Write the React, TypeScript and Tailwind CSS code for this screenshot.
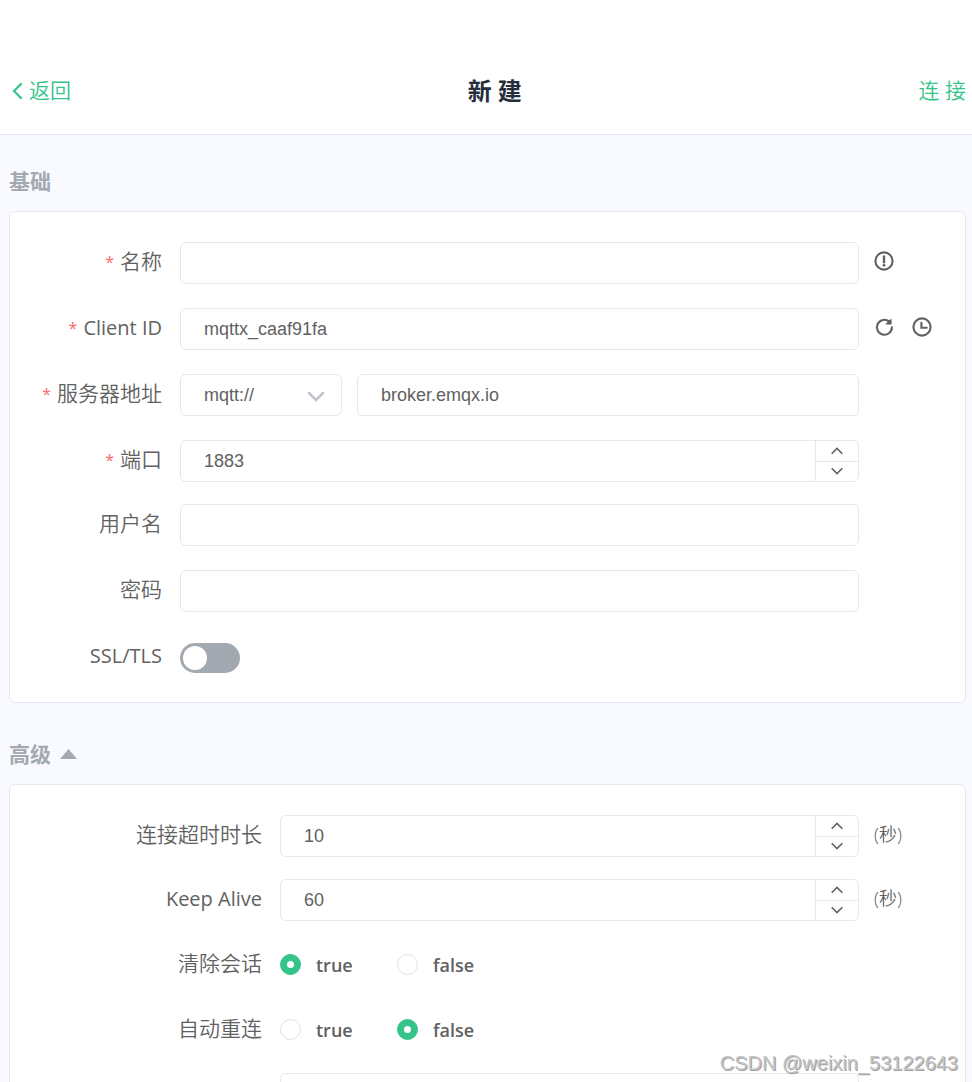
import { useState } from "react";
import type { ReactNode } from "react";

/**
 * New connection form.
 *
 * Two cards: the basic broker settings and the advanced ones, which can be
 * folded away with the arrow beside the heading.
 */

const BOX =
  "h-[42px] w-full min-w-0 rounded-md border border-[#e6e6f1] bg-white pl-[23px] font-['Liberation_Sans',Arial,sans-serif] text-lg text-[#616161] outline-none focus:border-[#34c388]";

export default function App() {
  const [name, setName] = useState("");
  const [clientId, setClientId] = useState("mqttx_caaf91fa");
  const [protocol, setProtocol] = useState("mqtt://");
  const [host, setHost] = useState("broker.emqx.io");
  const [port, setPort] = useState(1883);
  const [username, setUsername] = useState("");
  const [password, setPassword] = useState("");
  const [ssl, setSsl] = useState(false);
  const [open, setOpen] = useState(true);
  const [timeout, setTimeoutValue] = useState(10);
  const [keepAlive, setKeepAlive] = useState(60);
  const [clean, setClean] = useState(true);
  const [reconnect, setReconnect] = useState(false);
  const [version, setVersion] = useState("");

  const newClientId = () =>
    setClientId(`mqttx_${Math.random().toString(16).slice(2, 10)}`);

  return (
    <div className="relative flex h-screen flex-col overflow-hidden bg-[#f9faff] font-['Open_Sans','Noto_Sans_CJK_SC',sans-serif] text-[#616161]">
      <header className="flex items-center justify-between border-b border-[#e6e6f1] bg-white pt-[50px] pr-1.5 pb-0.5 pl-3">
        <a
          href="#back"
          className="flex h-[82px] items-center gap-[7px] text-[21px] font-[350] text-[#34c388]"
        >
          <ChevronLeft />
          返回
        </a>
        <h1 className="text-2xl font-bold text-[#262e3c]">新 建</h1>
        <button
          type="button"
          className="text-[21px] font-[350] text-[#34c388]"
        >
          连 接
        </button>
      </header>

      <main className="min-h-0 flex-1 overflow-y-auto pr-1.5 pl-[9px] [scrollbar-width:none]">
        <section aria-labelledby="basic-heading">
          <h2
            id="basic-heading"
            className="mt-[30px] mb-3.5 text-[21px] leading-8 font-bold text-[#a2a9b0]"
          >
            基础
          </h2>
          <Card>
            <Row label="名称" htmlFor="name" required trailing={<InfoIcon />}>
              <input
                id="name"
                className={BOX}
                value={name}
                onChange={(e) => setName(e.target.value)}
              />
            </Row>
            <Row
              label="Client ID"
              htmlFor="client-id"
              required
              trailing={
                <>
                  <button
                    type="button"
                    aria-label="Refresh"
                    onClick={newClientId}
                  >
                    <RefreshIcon />
                  </button>
                  <button type="button" aria-label="Timestamp">
                    <ClockIcon />
                  </button>
                </>
              }
            >
              <input
                id="client-id"
                className={BOX}
                value={clientId}
                onChange={(e) => setClientId(e.target.value)}
              />
            </Row>
            <Row label="服务器地址" htmlFor="host" required>
              <div className="flex gap-[15px]">
                <div className="relative w-[162px] shrink-0">
                  <select
                    aria-label="Protocol"
                    className={`${BOX} appearance-none`}
                    value={protocol}
                    onChange={(e) => setProtocol(e.target.value)}
                  >
                    <option>mqtt://</option>
                    <option>mqtts://</option>
                    <option>ws://</option>
                    <option>wss://</option>
                  </select>
                  <svg
                    className="pointer-events-none absolute top-[17px] right-[17px] h-3 w-[18px]"
                    viewBox="0 0 18 12"
                    fill="none"
                    stroke="#c0c4cc"
                    strokeWidth="2.6"
                    strokeLinecap="round"
                  >
                    <path d="M2 2l7 7 7-7" />
                  </svg>
                </div>
                <input
                  id="host"
                  className={BOX}
                  value={host}
                  onChange={(e) => setHost(e.target.value)}
                />
              </div>
            </Row>
            <Row label="端口" htmlFor="port" required tight>
              <NumberBox id="port" value={port} onChange={setPort} />
            </Row>
            <Row label="用户名" htmlFor="username">
              <input
                id="username"
                className={BOX}
                value={username}
                onChange={(e) => setUsername(e.target.value)}
              />
            </Row>
            <Row label="密码" htmlFor="password">
              <input
                id="password"
                type="password"
                className={BOX}
                value={password}
                onChange={(e) => setPassword(e.target.value)}
              />
            </Row>
            <Row label="SSL/TLS" htmlFor="ssl">
              <input
                id="ssl"
                type="checkbox"
                role="switch"
                checked={ssl}
                onChange={(e) => setSsl(e.target.checked)}
                className="mt-0.5 block h-[30px] w-[60px] appearance-none rounded-full bg-[#a2a9b0] p-[3px] before:block before:size-6 before:rounded-full before:bg-white before:transition-transform checked:bg-[#34c388] checked:before:translate-x-[30px]"
              />
            </Row>
          </Card>
        </section>

        <section aria-labelledby="advanced-heading">
          <div className="mt-[35px] mb-3.5 flex items-center gap-[9px] text-[#a2a9b0]">
            <h2
              id="advanced-heading"
              className="text-[21px] leading-8 font-bold"
            >
              高级
            </h2>
            <button
              type="button"
              aria-label="Toggle advanced settings"
              aria-expanded={open}
              onClick={() => setOpen(!open)}
            >
              <svg
                className={open ? "h-2.5 w-[17px]" : "h-2.5 w-[17px] rotate-180"}
                viewBox="0 0 17 10"
                fill="currentColor"
              >
                <path d="M8.5 0L17 10H0z" />
              </svg>
            </button>
          </div>
          {open && (
            <Card>
              <Row
                label="连接超时时长"
                htmlFor="timeout"
                wide
                tight
                trailing={<Unit />}
              >
                <NumberBox
                  id="timeout"
                  value={timeout}
                  onChange={setTimeoutValue}
                />
              </Row>
              <Row
                label="Keep Alive"
                htmlFor="keep-alive"
                wide
                tight
                trailing={<Unit />}
              >
                <NumberBox
                  id="keep-alive"
                  value={keepAlive}
                  onChange={setKeepAlive}
                />
              </Row>
              <Row label="清除会话" wide tight>
                <BoolRadios name="clean" value={clean} onChange={setClean} />
              </Row>
              <Row label="自动重连" wide tight>
                <BoolRadios
                  name="reconnect"
                  value={reconnect}
                  onChange={setReconnect}
                />
              </Row>
              <Row wide tight>
                <input
                  aria-label="MQTT version"
                  className={BOX}
                  value={version}
                  onChange={(e) => setVersion(e.target.value)}
                />
              </Row>
            </Card>
          )}
        </section>
      </main>

      <div className="pointer-events-none absolute right-[14px] bottom-[5px] font-['Liberation_Sans',Arial,sans-serif] text-xl text-[#c4c4c4] [text-shadow:1px_1px_0_#a0a0a0]">
        CSDN @weixin_53122643
      </div>
    </div>
  );
}

function Card({ children }: { children: ReactNode }) {
  return (
    <div className="rounded-md border border-[#e6e6f1] bg-white pt-[30px]">
      {children}
    </div>
  );
}

function Row({
  label,
  htmlFor,
  required,
  wide,
  tight,
  trailing,
  children,
}: {
  label?: string;
  htmlFor?: string;
  required?: boolean;
  wide?: boolean;
  tight?: boolean;
  trailing?: ReactNode;
  children: ReactNode;
}) {
  const labelClass = `flex shrink-0 items-center justify-end gap-1.5 pr-[18px] pb-0.5 text-[21px] ${
    wide ? "w-[270px]" : "w-[170px]"
  }`;
  const text = (
    <>
      {required && <span className="text-base text-[#f56c6c]">*</span>}
      <span
        className={/^[A-Z]/.test(label ?? "") ? "text-xl" : "font-[350]"}
      >
        {label}
      </span>
    </>
  );

  return (
    <div className={`flex min-h-[42px] ${tight ? "mb-[22px]" : "mb-6"}`}>
      {htmlFor ? (
        <label htmlFor={htmlFor} className={labelClass}>
          {text}
        </label>
      ) : (
        <div className={labelClass}>{text}</div>
      )}
      <div className="min-w-0 flex-1 self-center">{children}</div>
      <div className="flex w-[106px] shrink-0 items-center gap-[18px] pb-1 pl-[15px]">
        {trailing}
      </div>
    </div>
  );
}

function NumberBox({
  id,
  value,
  onChange,
}: {
  id: string;
  value: number;
  onChange: (next: number) => void;
}) {
  return (
    <div className="relative">
      <input
        id={id}
        inputMode="numeric"
        className={BOX}
        value={value}
        onChange={(e) => onChange(Number(e.target.value) || 0)}
      />
      <div className="absolute inset-y-px right-px flex w-[43px] flex-col divide-y divide-[#e6e6f1] border-l border-[#e6e6f1]">
        <button
          type="button"
          aria-label="Increase"
          className="flex flex-1 items-center justify-center"
          onClick={() => onChange(value + 1)}
        >
          <svg
            className="h-2 w-3"
            viewBox="0 0 12 8"
            fill="none"
            stroke="currentColor"
            strokeWidth="1.6"
          >
            <path d="M0.7 6.8L6 1.5l5.3 5.3" />
          </svg>
        </button>
        <button
          type="button"
          aria-label="Decrease"
          className="flex flex-1 items-center justify-center"
          onClick={() => onChange(Math.max(0, value - 1))}
        >
          <svg
            className="h-2 w-3"
            viewBox="0 0 12 8"
            fill="none"
            stroke="currentColor"
            strokeWidth="1.6"
          >
            <path d="M0.7 1.2L6 6.5l5.3-5.3" />
          </svg>
        </button>
      </div>
    </div>
  );
}

function BoolRadios({
  name,
  value,
  onChange,
}: {
  name: string;
  value: boolean;
  onChange: (next: boolean) => void;
}) {
  return (
    <div className="flex h-[43px] items-center">
      {[true, false].map((opt) => (
        <label
          key={String(opt)}
          className="flex w-[117px] items-center gap-[15px] text-lg font-semibold"
        >
          <input
            type="radio"
            name={name}
            checked={value === opt}
            onChange={() => onChange(opt)}
            className="flex size-[21px] appearance-none items-center justify-center rounded-full border border-[#dfdfea] bg-white before:size-[7px] before:rounded-full before:bg-white checked:border-[#34c388] checked:bg-[#34c388]"
          />
          {String(opt)}
        </label>
      ))}
    </div>
  );
}

function Unit() {
  return <span className="text-lg font-[350]">(秒)</span>;
}

// --- icons ----------------------------------------------------------------

function ChevronLeft() {
  return (
    <svg
      className="h-[18px] w-2.5"
      viewBox="0 0 10 18"
      fill="none"
      stroke="currentColor"
      strokeWidth="2.2"
      strokeLinecap="round"
    >
      <path d="M9 2L2 9l7 7" />
    </svg>
  );
}

function InfoIcon() {
  return (
    <svg
      className="size-5"
      viewBox="0 0 20 20"
      fill="none"
      stroke="currentColor"
      strokeWidth="2.1"
    >
      <circle cx="10" cy="10" r="8.6" />
      <path d="M10 5.4v5.8" strokeWidth="2.4" strokeLinecap="round" />
      <circle cx="10" cy="14.3" r="1.4" fill="currentColor" stroke="none" />
    </svg>
  );
}

function RefreshIcon() {
  return (
    <svg
      className="size-5"
      viewBox="0 0 20 20"
      fill="none"
      stroke="currentColor"
      strokeWidth="2.1"
      strokeLinecap="round"
    >
      <path d="M17.9 10.4a7.5 7.5 0 1 1-2.6-5.8" />
      <path
        d="M17 2.6v4.3h-4.6l2.4-2.3z"
        fill="currentColor"
        strokeWidth="1.2"
        strokeLinejoin="round"
      />
    </svg>
  );
}

function ClockIcon() {
  return (
    <svg
      className="size-5"
      viewBox="0 0 20 20"
      fill="none"
      stroke="currentColor"
      strokeWidth="2.1"
      strokeLinecap="round"
    >
      <circle cx="10" cy="10" r="8.6" />
      <path d="M9.4 5.8v5h5.4" />
    </svg>
  );
}
